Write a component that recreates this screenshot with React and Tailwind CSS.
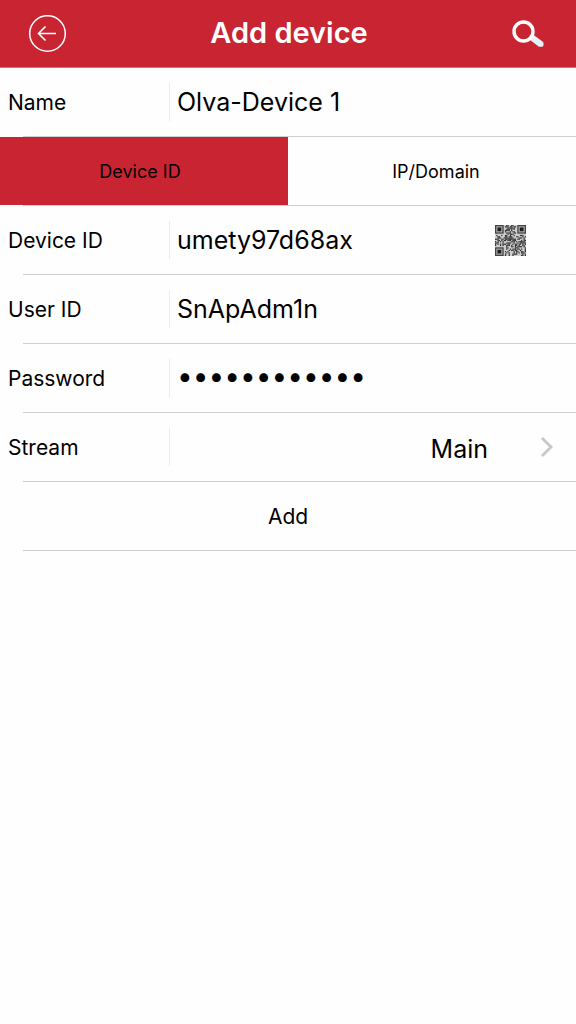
import { useState } from 'react';

const QR_SIZE = 25;

const inFinder = (x, y) =>
  (x < 8 && y < 8) || (x >= QR_SIZE - 8 && y < 8) || (x < 8 && y >= QR_SIZE - 8);

const qrModules = [];
let seed = 97;
for (let y = 0; y < QR_SIZE; y++) {
  for (let x = 0; x < QR_SIZE; x++) {
    seed = (seed * 16807) % 2147483647;
    if (!inFinder(x, y) && seed % 100 < 52) {
      qrModules.push([x, y]);
    }
  }
}

function BackIcon() {
  return (
    <svg viewBox="0 0 38 38" className="size-[38px]" fill="none" stroke="white" aria-hidden="true">
      <circle cx="18.5" cy="18.5" r="17.8" strokeWidth="1.5" />
      <path d="M27 18.500H9.500M16.500 11.500l-7 7 7 7" strokeWidth="1.6" />
    </svg>
  );
}

function SearchIcon() {
  return (
    <svg viewBox="0 0 34 30" className="h-[30px] w-[34px]" fill="none" aria-hidden="true">
      <path d="M19.5 19l3.500-2.800 9.200 6.800q1.200 3-0.700 4.800h-3.600l-8.400-6.600z" fill="#e6f1f6" />
      <circle cx="12.5" cy="12.500" r="9.500" stroke="white" strokeWidth="3.400" />
    </svg>
  );
}

function QrIcon() {
  return (
    <svg viewBox="0 0 25 25" className="size-[31px]" aria-hidden="true">
      <rect width="25" height="25" fill="#cfcfcf" />
      {qrModules.map(([x, y]) => (
        <rect key={`${x}-${y}`} x={x} y={y} width="1" height="1" fill="#2e2e2e" />
      ))}
      {[[0, 0], [18, 0], [0, 18]].map(([x, y]) => (
        <g key={`${x}-${y}`}>
          <rect x={x + 0.5} y={y + 0.5} width="6" height="6" fill="#a8a8a8" stroke="#444" />
          <rect x={x + 2} y={y + 2} width="3" height="3" fill="#1c1c1c" />
        </g>
      ))}
    </svg>
  );
}

function Divider() {
  return <div className="ml-[23px] h-px bg-[#cfced2]" />;
}

function Row({ id, label, children }) {
  return (
    <>
      <div className="flex h-[68px] items-center">
        <label htmlFor={id} className="w-[169px] shrink-0 pl-2 pt-0.5 text-[21px]">
          {label}
        </label>
        <div className="flex h-[38px] min-w-0 flex-1 items-center border-l border-[#ececec] pl-[7px]">
          {children}
        </div>
      </div>
      <Divider />
    </>
  );
}

export default function App() {
  const [form, setForm] = useState({
    name: 'Olva-Device 1',
    deviceId: 'umety97d68ax',
    userId: 'SnApAdm1n',
    password: 'password1234',
    stream: 'Main',
  });
  const [mode, setMode] = useState('id');

  const update = (key) => (e) => setForm({ ...form, [key]: e.target.value });

  const inputClass = 'h-9 min-w-0 flex-1 bg-transparent pt-0.5 text-[25px] outline-none';

  return (
    <div className="min-h-screen bg-[#fefefe] font-['Inter',sans-serif] text-black">
      <header className="flex h-[68px] items-center justify-between border-b border-[#bd8087] bg-[#c92432] pl-[29px] pr-[31px]">
        <button type="button" aria-label="Back">
          <BackIcon />
        </button>
        <h1 className="pb-0.5 text-[29px] font-semibold leading-9 text-white">Add device</h1>
        <button type="button" aria-label="Search">
          <SearchIcon />
        </button>
      </header>

      <form onSubmit={(e) => e.preventDefault()}>
        <Row id="name" label="Name">
          <input id="name" type="text" value={form.name} onChange={update('name')} className={inputClass} />
        </Row>

        <div className="grid h-[68px] grid-cols-2 text-[18px]">
          <button
            type="button"
            onClick={() => setMode('id')}
            className={mode === 'id' ? 'bg-[#c92432] pr-2' : 'pr-2'}
          >
            Device ID
          </button>
          <button
            type="button"
            onClick={() => setMode('ip')}
            className={mode === 'ip' ? 'bg-[#c92432] pl-2' : 'pl-2'}
          >
            IP/Domain
          </button>
        </div>
        <Divider />

        <Row id="deviceId" label="Device ID">
          <input
            id="deviceId"
            type="text"
            value={form.deviceId}
            onChange={update('deviceId')}
            className={inputClass}
          />
          <button type="button" aria-label="Scan QR code" className="mr-[50px]">
            <QrIcon />
          </button>
        </Row>

        <Row id="userId" label="User ID">
          <input id="userId" type="text" value={form.userId} onChange={update('userId')} className={inputClass} />
        </Row>

        <Row id="password" label="Password">
          <input
            id="password"
            type="password"
            value={form.password}
            onChange={update('password')}
            className="h-9 min-w-0 flex-1 bg-transparent pb-1 text-[28px] outline-none"
          />
        </Row>

        <Row id="stream" label="Stream">
          <select
            id="stream"
            value={form.stream}
            onChange={update('stream')}
            className="h-9 min-w-0 flex-1 appearance-none bg-transparent pt-0.5 text-right text-[25px] outline-none [text-align-last:right]"
          >
            <option>Main</option>
            <option>Sub</option>
          </select>
          <svg
            viewBox="0 0 14 22"
            className="ml-[52px] mr-[22px] h-[22px] w-[14px] shrink-0"
            fill="none"
            stroke="#c7c7cc"
            strokeWidth="2.800"
            aria-hidden="true"
          >
            <path d="M2 2l9 9-9 9" />
          </svg>
        </Row>

        <button type="submit" className="block h-[68px] w-full pt-0.5 text-[21px]">
          Add
        </button>
        <Divider />
      </form>
    </div>
  );
}
